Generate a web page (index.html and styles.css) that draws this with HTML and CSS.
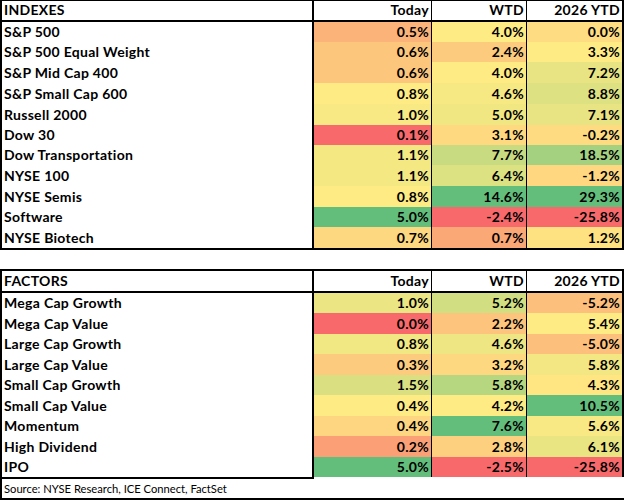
FILE: index.html
```html
<!DOCTYPE html>
<html>
<head>
<meta charset="utf-8">
<link rel="stylesheet" href="styles.css">
</head>
<body>
<div class="sheet">
  <div class="tbl indexes">
    <div class="cell head label">INDEXES</div>
    <div class="cell head num c1">Today</div>
    <div class="cell head num c2">WTD</div>
    <div class="cell head num c3">2026 YTD</div>

    <div class="cell label">S&amp;P 500</div>
    <div class="cell num c1" style="background:#FCB379">0.5%</div>
    <div class="cell num c2" style="background:#FFEB84">4.0%</div>
    <div class="cell num c3" style="background:#FEDC81">0.0%</div>

    <div class="cell label">S&amp;P 500 Equal Weight</div>
    <div class="cell num c1" style="background:#FDC67D">0.6%</div>
    <div class="cell num c2" style="background:#FDCB7E">2.4%</div>
    <div class="cell num c3" style="background:#FFEB84">3.3%</div>

    <div class="cell label">S&amp;P Mid Cap 400</div>
    <div class="cell num c1" style="background:#FDC67D">0.6%</div>
    <div class="cell num c2" style="background:#FFEB84">4.0%</div>
    <div class="cell num c3" style="background:#E8E483">7.2%</div>

    <div class="cell label">S&amp;P Small Cap 600</div>
    <div class="cell num c1" style="background:#FFEB84">0.8%</div>
    <div class="cell num c2" style="background:#F6E883">4.6%</div>
    <div class="cell num c3" style="background:#DEE182">8.8%</div>

    <div class="cell label">Russell 2000</div>
    <div class="cell num c1" style="background:#F8E984">1.0%</div>
    <div class="cell num c2" style="background:#F0E783">5.0%</div>
    <div class="cell num c3" style="background:#E8E483">7.1%</div>

    <div class="cell label">Dow 30</div>
    <div class="cell num c1" style="background:#F8696B">0.1%</div>
    <div class="cell num c2" style="background:#FED980">3.1%</div>
    <div class="cell num c3" style="background:#FEDB81">-0.2%</div>

    <div class="cell label">Dow Transportation</div>
    <div class="cell num c1" style="background:#F4E883">1.1%</div>
    <div class="cell num c2" style="background:#C8DB81">7.7%</div>
    <div class="cell num c3" style="background:#A4D17F">18.5%</div>

    <div class="cell label">NYSE 100</div>
    <div class="cell num c1" style="background:#F4E883">1.1%</div>
    <div class="cell num c2" style="background:#DCE182">6.4%</div>
    <div class="cell num c3" style="background:#FED780">-1.2%</div>

    <div class="cell label">NYSE Semis</div>
    <div class="cell num c1" style="background:#FFEB84">0.8%</div>
    <div class="cell num c2" style="background:#63BE7B">14.6%</div>
    <div class="cell num c3" style="background:#63BE7B">29.3%</div>

    <div class="cell label">Software</div>
    <div class="cell num c1" style="background:#63BE7B">5.0%</div>
    <div class="cell num c2" style="background:#F8696B">-2.4%</div>
    <div class="cell num c3" style="background:#F8696B">-25.8%</div>

    <div class="cell label">NYSE Biotech</div>
    <div class="cell num c1" style="background:#FED880">0.7%</div>
    <div class="cell num c2" style="background:#FBA877">0.7%</div>
    <div class="cell num c3" style="background:#FEE282">1.2%</div>
  </div>

  <div class="tbl factors">
    <div class="cell head label">FACTORS</div>
    <div class="cell head num c1">Today</div>
    <div class="cell head num c2">WTD</div>
    <div class="cell head num c3">2026 YTD</div>

    <div class="cell label">Mega Cap Growth</div>
    <div class="cell num c1" style="background:#EBE583">1.0%</div>
    <div class="cell num c2" style="background:#D1DE81">5.2%</div>
    <div class="cell num c3" style="background:#FDBF7C">-5.2%</div>

    <div class="cell label">Mega Cap Value</div>
    <div class="cell num c1" style="background:#F8696B">0.0%</div>
    <div class="cell num c2" style="background:#FDC47D">2.2%</div>
    <div class="cell num c3" style="background:#FFEB84">5.4%</div>

    <div class="cell label">Large Cap Growth</div>
    <div class="cell num c1" style="background:#F1E783">0.8%</div>
    <div class="cell num c2" style="background:#EDE683">4.6%</div>
    <div class="cell num c3" style="background:#FDC07C">-5.0%</div>

    <div class="cell label">Large Cap Value</div>
    <div class="cell num c1" style="background:#FDCB7E">0.3%</div>
    <div class="cell num c2" style="background:#FED880">3.2%</div>
    <div class="cell num c3" style="background:#F3E783">5.8%</div>

    <div class="cell label">Small Cap Growth</div>
    <div class="cell num c1" style="background:#DAE082">1.5%</div>
    <div class="cell num c2" style="background:#B6D680">5.8%</div>
    <div class="cell num c3" style="background:#FFE683">4.3%</div>

    <div class="cell label">Small Cap Value</div>
    <div class="cell num c1" style="background:#FFEB84">0.4%</div>
    <div class="cell num c2" style="background:#FFEB84">4.2%</div>
    <div class="cell num c3" style="background:#63BE7B">10.5%</div>

    <div class="cell label">Momentum</div>
    <div class="cell num c1" style="background:#FED580">0.4%</div>
    <div class="cell num c2" style="background:#63BE7B">7.6%</div>
    <div class="cell num c3" style="background:#F9E984">5.6%</div>

    <div class="cell label">High Dividend</div>
    <div class="cell num c1" style="background:#FBA076">0.2%</div>
    <div class="cell num c2" style="background:#FDD07F">2.8%</div>
    <div class="cell num c3" style="background:#EAE583">6.1%</div>

    <div class="cell label">IPO</div>
    <div class="cell num c1" style="background:#63BE7B">5.0%</div>
    <div class="cell num c2" style="background:#F8696B">-2.5%</div>
    <div class="cell num c3" style="background:#F8696B">-25.8%</div>
  </div>

  <div class="source">Source: NYSE Research, ICE Connect, FactSet</div>
</div>
</body>
</html>
```

FILE: styles.css
```css
html, body {
  margin: 0;
  padding: 0;
  background: #ffffff;
}

.sheet {
  width: 624px;
  font-family: Lato, "Liberation Sans", sans-serif;
  color: #000;
}

.tbl {
  display: grid;
  grid-template-columns: 312px 118px 95px 95px;
  box-sizing: border-box;
  width: 624px;
  border-left: 2px solid #000;
  border-right: 2px solid #000;
}

.indexes {
  border-top: 1px solid #000;
  border-bottom: 2px solid #000;
  grid-template-rows: 21px 20px 20px 21px 21px 21px 20px 20px 21px 21px 20px 21px;
}

.factors {
  margin-top: 19px;
  border-top: 2px solid #000;
  grid-template-rows: 22px 20px 21px 20px 21px 20px 21px 20px 21px 20px;
}

.cell {
  box-sizing: border-box;
  display: flex;
  align-items: flex-end;
  font-weight: 700;
  font-size: 14px;
  letter-spacing: 0.3px;
  line-height: 16px;
  padding-bottom: 2px;
  white-space: nowrap;
}

.label {
  padding-left: 2px;
  border-right: 2px solid #000;
}

.num {
  justify-content: flex-end;
  padding-right: 2px;
}

.c1, .c2 {
  border-right: 1px solid #000;
}

.head {
  border-bottom: 2px solid #000;
  background: #fff;
}

.source {
  box-sizing: border-box;
  width: 624px;
  height: 23px;
  border-left: 2px solid #000;
  border-bottom: 2px solid #000;
  padding: 2px 0 0 2px;
  background: linear-gradient(#000, #000) 0 0 / 312px 2px no-repeat;
  display: flex;
  align-items: center;
  font-size: 11.2px;
  font-weight: 400;
}
```
